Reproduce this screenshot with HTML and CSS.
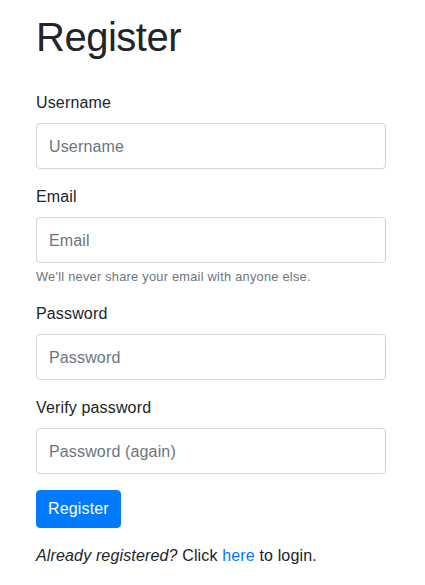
FILE: index.html
```html
<!DOCTYPE html>
<html lang="en">
<head>
    <meta charset="UTF-8">
    <meta name="viewport" content="width=device-width, initial-scale=1.0">
    <title>Register</title>
    <link rel="stylesheet" href="styles.css">
</head>
<body>
    <!-- Registration form -->
    <div class="container">
        <h1>Register</h1>
        <form class="register-form" onsubmit="return false;">
            <div class="form-group">
                <label for="username">Username</label>
                <input type="text" id="username" class="form-control" placeholder="Username">
            </div>
            <div class="form-group">
                <label for="email">Email</label>
                <input type="email" id="email" class="form-control" placeholder="Email">
                <small class="form-text">We'll never share your email with anyone else.</small>
            </div>
            <div class="form-group">
                <label for="password">Password</label>
                <input type="password" id="password" class="form-control" placeholder="Password">
            </div>
            <div class="form-group">
                <label for="password2">Verify password</label>
                <input type="password" id="password2" class="form-control" placeholder="Password (again)">
            </div>
            <button type="submit" class="btn-primary">Register</button>
        </form>
        <p class="login-note"><em>Already registered?</em> Click <a href="#">here</a> to login.</p>
    </div>
</body>
</html>
```

FILE: styles.css
```css
body {
    margin: 0;
    font-family: "Liberation Sans", Arial, sans-serif;
    font-size: 16px;
    line-height: 1.5;
    letter-spacing: 0.15px;
    color: #212529;
    background-color: #fff;
}
.container {
    padding: 13px 0 0 36px;
}
h1 {
    margin: 0 0 30px;
    font-size: 40px;
    font-weight: 500;
    line-height: 1.2;
    letter-spacing: -0.5px;
}
.register-form {
    width: 350px;
}
.form-group {
    margin-bottom: 16px;
}
label {
    display: block;
    margin-bottom: 8px;
}
.form-control {
    display: block;
    box-sizing: border-box;
    width: 100%;
    height: 46px;
    padding: 11px 12px 9px;
    font-family: inherit;
    font-size: 16px;
    line-height: 1.5;
    letter-spacing: 0.15px;
    color: #495057;
    background-color: #fff;
    border: 1px solid #ced4da;
    border-radius: 4px;
}
.form-control::placeholder {
    color: #6c757d;
    opacity: 1;
}
.form-text {
    display: block;
    margin-top: 4px;
    font-size: 12.8px;
    letter-spacing: 0.25px;
    color: #6c757d;
}
.btn-primary {
    display: inline-block;
    height: 38px;
    padding: 6px 11px;
    font-family: inherit;
    font-size: 16px;
    line-height: 1.5;
    letter-spacing: 0.15px;
    color: #fff;
    background-color: #007bff;
    border: 1px solid #007bff;
    border-radius: 4px;
    cursor: pointer;
}
.login-note {
    margin: 16px 0 0;
}
.login-note a {
    color: #007bff;
    text-decoration: none;
}
```
